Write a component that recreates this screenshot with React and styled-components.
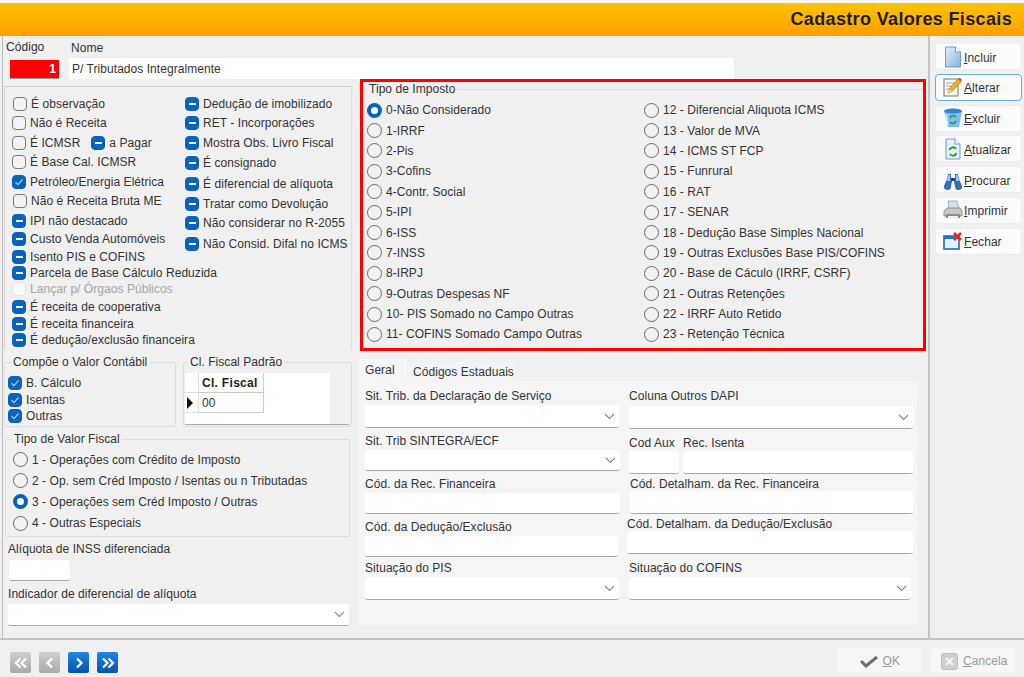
import React from "react";
import styled, { createGlobalStyle } from "styled-components";

const Global = createGlobalStyle`
  html, body { margin: 0; padding: 0; background: #fff; }
  * { box-sizing: border-box; }
  body { font-family: "Liberation Sans", Arial, sans-serif; font-size: 12px; color: #333; letter-spacing: .05px; }
`;
const Page = styled.div`width:1024px;height:677px;overflow:hidden;display:flex;flex-direction:column;background:#f0f0f0;border-top:3px solid #fbfaf5;`;
const Header = styled.header`height:33px;flex:none;display:flex;align-items:center;justify-content:flex-end;padding:0 12px 1px 0;background:linear-gradient(#ffc400,#ff9d00);`;
const Title = styled.h1`margin:0;font-size:18px;font-weight:700;color:#1c1c1c;letter-spacing:.35px;`;
const Frame = styled.div`flex:none;height:602px;display:flex;`;
const Main = styled.main`width:928px;margin-left:2px;border-left:1px solid #bdbdbd;border-right:2px solid #c4c4c4;display:flex;flex-direction:column;`;
const Side = styled.aside`flex:1;padding:7px 0 0 5px;display:flex;flex-direction:column;gap:3.8px;`;
const SideBtn = styled.button`width:87px;height:27px;flex:none;display:flex;align-items:center;gap:1px;padding:0 0 0 7px;border-radius:4px;background:#fbfbfb;font:inherit;letter-spacing:inherit;color:#333;border:${p=>p.$focus?"1.5px solid #6aaee6":"1px solid #ececec"};`;
const SideText = styled.span`padding-top:2px;`;
const U = styled.span`text-decoration:underline;`;
const TopRow = styled.div`height:44px;flex:none;display:flex;padding-left:3px;`;
const CodeField = styled.div`width:63px;padding-top:4px;`;
const NameField = styled.div`width:665px;padding-top:5px;`;
const Lbl = styled.div`height:14px;line-height:14px;white-space:nowrap;margin-left:${p=>p.$ml||0}px;margin-top:${p=>p.$mt||0}px;`;
const CodeInput = styled.div`width:49px;height:19px;margin:6px 0 0 4px;padding:0 3px;background:#ff0000;border-bottom:1px solid #999;color:#fff;font-weight:700;text-align:right;line-height:18px;`;
const NameInput = styled.div`height:21px;margin-top:3px;padding:1px 3px 0;background:#fff;line-height:21px;`;
const Columns = styled.div`flex:1;display:flex;min-height:0;`;
const LeftCol = styled.div`width:352px;flex:none;`;
const RightCol = styled.div`width:568px;margin-left:3px;flex:none;`;
const Options = styled.section`width:348px;height:264px;margin:6px 0 0 1px;padding:9px 0 0 7px;border-top:1px solid #cfcfcf;border-left:1px solid #cfcfcf;border-right:1px solid #dedede;display:grid;grid-template-columns:173px 1fr;`;
const OptCol = styled.div`display:flex;flex-direction:column;`;
const Row = styled.div`height:16px;flex:none;display:flex;align-items:center;white-space:nowrap;gap:${p=>p.$gap??4}px;margin-top:${p=>p.$mt||0}px;margin-left:${p=>p.$ml||0}px;color:${p=>p.$off?"#a5a5a5":"inherit"};`;
const CheckBox = styled.span`width:14px;height:14px;flex:none;border-radius:4px;display:flex;align-items:center;justify-content:center;margin-left:${p=>p.$ml||0}px;
  background:${p=>p.$s==="mixed"||p.$s==="checked"?"#0a63b8":"#f3f3f3"};
  border:${p=>p.$s==="mixed"||p.$s==="checked"?"1px solid #0a63b8":p.$s==="off"?"1px solid #e2e2e2":"1px solid #7a7a7a"};
  ${p=>p.$s==="off"?"background:#f8f8f8;":""}`;
const Dash = styled.span`width:7px;height:2px;background:#e8f1fa;`;
const Check = ({ s, ml }) => (
  <CheckBox $s={s} $ml={ml}>
    {s === "mixed" && <Dash />}
    {s === "checked" && <svg width="10" height="10" viewBox="0 0 10 10"><path d="M1.500 5.200 4 7.600 8.600 2.400" fill="none" stroke="#a9cbea" strokeWidth="1.300" /></svg>}
  </CheckBox>
);
const RadioDot = styled.span`width:15px;height:15px;flex:none;border-radius:50%;background:${p=>p.$on?"#fff":"#f2f2f2"};border:${p=>p.$on?"4px solid #0a63b8":"1.5px solid #6a6a6a"};`;
const LowerRow = styled.div`display:flex;margin:5px 0 0 1px;gap:7px;`;
const Group = styled.fieldset`margin:0;min-width:0;border:1px solid #dcdcdc;border-radius:2px;padding:${p=>p.$pad||"0"};width:${p=>p.$w}px;height:${p=>p.$h}px;margin-left:${p=>p.$ml||0}px;margin-top:${p=>p.$mt||0}px;`;
const Legend = styled.legend`padding:0 2px;margin-left:${p=>p.$ml??3}px;height:14px;line-height:14px;`;
const GridWrap = styled.div`height:52px;display:flex;background:#fff;border-bottom:1px solid #aaa;`;
const GridBody = styled.div`flex:1;`;
const GridScroll = styled.div`width:19px;background:#f0f0f0;`;
const GridRow = styled.div`height:20px;display:flex;`;
const Ind = styled.div`width:14px;border-right:1px solid #ddd;border-bottom:1px solid #ddd;display:flex;align-items:center;`;
const Cell = styled.div`width:65px;padding:0 3px;line-height:20px;border-right:1px solid #ccc;border-bottom:1px solid #ccc;font-weight:${p=>p.$b?700:400};letter-spacing:${p=>p.$b?".3px":"inherit"};color:${p=>p.$b?"#222":"inherit"};`;
const Red = styled.section`width:566px;height:272px;margin:-1px 0 0 2px;border:3px solid #f00;`;
const ImpostoGroup = styled.fieldset`margin:0;padding:4px 0 0 4px;height:100%;border:0;border-top:1px solid #dcdcdc;min-width:0;`;
const ImpostoGrid = styled.div`display:grid;grid-template-rows:repeat(12,20.4px);grid-auto-flow:column;grid-template-columns:277px 1fr;`;
const RadioRow = styled.div`display:flex;align-items:center;gap:4px;white-space:nowrap;`;
const Stack = styled.div`padding:6px 0 0 7px;display:flex;flex-direction:column;gap:6.2px;`;
const Tabs = styled.div`display:flex;align-items:flex-end;height:22px;margin-top:8px;`;
const Tab = styled.div`height:${p=>p.$on?23:19}px;width:${p=>p.$on?49:107}px;flex:none;white-space:nowrap;margin-left:${p=>p.$on?0:1}px;margin-bottom:${p=>p.$on?-1:0}px;display:flex;align-items:center;padding:${p=>p.$on?"0 0 2px 7px":"1px 0 0 5px"};background:${p=>p.$on?"#f5f5f5":"#f3f3f3"};position:relative;`;
const Panel = styled.div`width:559px;height:244px;background:#f5f5f5;padding:8px 0 0 7px;display:grid;grid-template-columns:264px 1fr;`;
const FormCol = styled.div`display:flex;flex-direction:column;`;
const Field = styled.div`margin-top:${p=>p.$mt||0}px;margin-left:${p=>p.$ml||0}px;width:${p=>p.$w}px;flex:none;`;
const FieldPair = styled.div`display:flex;gap:4px;margin-top:${p=>p.$mt||0}px;`;
const Ctl = styled.div`height:${p=>p.$h||21}px;margin-top:${p=>p.$gap??2}px;margin-left:${p=>p.$ml||0}px;width:${p=>p.$w?p.$w+"px":"auto"};background:#fff;border-radius:3px;border-bottom:1px solid #a8a8a8;display:flex;align-items:center;justify-content:flex-end;padding-right:4px;`;
const Chev = () => <svg width="11" height="7" viewBox="0 0 11 7"><path d="M1 1 5.500 5.500 10 1" fill="none" stroke="#8a8a8a" strokeWidth="1.100" /></svg>;
const Bottom = styled.footer`flex:1;border-top:2px solid #c4c4c4;display:flex;justify-content:space-between;padding:8px 9px 0 10px;`;
const Nav = styled.div`display:flex;gap:8px;padding-top:4px;`;
const NavBtn = styled.div`width:21px;height:21px;border-radius:2px;display:flex;align-items:center;justify-content:center;background:${p=>p.$on?"linear-gradient(#1f86e8,#0753a8)":"linear-gradient(#cfcfcf,#a9a9a9)"};`;
const Actions = styled.div`display:flex;gap:10px;`;
const ActBtn = styled.div`width:84px;height:26px;border-radius:4px;background:#f6f6f6;color:#9a9a9a;display:flex;align-items:center;justify-content:${p=>p.$end?"flex-end":"flex-start"};gap:5px;padding:${p=>p.$end?"0 21px 0 0":"0 0 0 10px"};`;

const Nv = ({ d, on }) => (
  <NavBtn $on={on}>
    <svg width="14" height="12" viewBox="0 0 14 12" fill="none" stroke="#fff" strokeWidth="2.200">
      <path d={d} />
    </svg>
  </NavBtn>
);

const IconDoc = () => (
  <svg width="20" height="22" viewBox="0 0 20 22"><defs><linearGradient id="a" x1="0" y1="0" x2="1" y2="1"><stop offset="0" stopColor="#e8f1fb" /><stop offset="1" stopColor="#7fb2e3" /></linearGradient></defs><path d="M2.500 1h10l5 5v15h-15z" fill="url(#a)" stroke="#6d9fd0" /><path d="M12.500 1v5h5" fill="#fff" stroke="#6d9fd0" /></svg>
);
const IconEdit = () => (
  <svg width="20" height="22" viewBox="0 0 20 22"><rect x="1" y="3" width="14" height="17" fill="#f7f7f2" stroke="#777" /><path d="M3 7h9M3 10h7M3 13h5" stroke="#aaa" /><path d="M5 17l1-4L15 3l3 2.500L9 15.500z" fill="#f2b21e" stroke="#a8650f" strokeWidth=".6" /><path d="M15 3l3 2.500 1-1.700-2.400-2z" fill="#d8482a" /><path d="M5 17l1-4 3 2.500z" fill="#f3dcae" /></svg>
);
const IconBin = () => (
  <svg width="20" height="22" viewBox="0 0 20 22"><path d="M1 4h18l-3 16H5z" fill="#7cc0ef" /><ellipse cx="10" cy="4" rx="9" ry="2.600" fill="#2a86d2" /><path d="M7 11a3.400 3.400 0 0 1 6-1M13 14a3.400 3.400 0 0 1-6 1" fill="none" stroke="#2e9d3a" strokeWidth="1.800" /><path d="M3 7l2 11" stroke="#d5ecfb" strokeWidth="1.400" /></svg>
);
const IconRefresh = () => (
  <svg width="20" height="22" viewBox="0 0 20 22"><path d="M3 1h9l5 5v15H3z" fill="#e6f0fa" stroke="#6d9fd0" /><path d="M12 1v5h5" fill="#fff" stroke="#6d9fd0" /><path d="M6.500 12a3.600 3.600 0 0 1 6.500-1M13.500 15a3.600 3.600 0 0 1-6.500 1" fill="none" stroke="#2e9d3a" strokeWidth="2" /></svg>
);
const IconBinoc = () => (
  <svg width="20" height="22" viewBox="0 0 20 22"><path d="M5 5h3v4h4V5h3l1 5 3 7a3 3 0 0 1-7 1l-1-6H9l-1 6a3 3 0 0 1-7-1l3-7z" fill="#2f6db5" /><path d="M5 6h2v6H4zM13 6h2l1 6h-3z" fill="#a4c6e8" /><rect x="8.500" y="9" width="3" height="3" fill="#1c3d6e" /></svg>
);
const IconPrinter = () => (
  <svg width="20" height="22" viewBox="0 0 20 22"><path d="M5 2h9l2 8H6z" fill="#cfe3f6" stroke="#7b98b5" strokeWidth=".7" /><path d="M1 12l3-3h13l2 3v5H1z" fill="#c8c8c8" stroke="#777" strokeWidth=".7" /><rect x="3" y="15" width="14" height="4" fill="#8d8d8d" /><rect x="5" y="17" width="10" height="3" fill="#f2f2f2" /></svg>
);
const IconClose = () => (
  <svg width="20" height="22" viewBox="0 0 20 22"><rect x="1" y="6" width="15" height="13" fill="#e6f2fb" stroke="#1f6bb5" strokeWidth="1.600" /><rect x="1" y="6" width="15" height="3" fill="#1f78c8" /><path d="M11 3l7 7M18 3l-7 7" stroke="#e0291c" strokeWidth="2.600" /></svg>
);

const col1 = [
  ["É observação", "empty", 0, 1],
  ["Não é Receita", "empty", 3],
  ["É ICMSR", "empty", 4, 0, true],
  ["É Base Cal. ICMSR", "empty", 3],
  ["Petróleo/Energia Elétrica", "checked", 4],
  ["Não é Receita Bruta ME", "empty", 3, 1],
  ["IPI não destacado", "mixed", 4],
  ["Custo Venda Automóveis", "mixed", 2],
  ["Isento PIS e COFINS", "mixed", 2],
  ["Parcela de Base Cálculo Reduzida", "mixed", 0],
  ["Lançar p/ Órgaos Públicos", "off", 0],
  ["É receita de cooperativa", "mixed", 2],
  ["É receita financeira", "mixed", 1],
  ["É dedução/exclusão financeira", "mixed", 0],
];
const col2 = [
  ["Dedução de imobilizado", 0],
  ["RET - Incorporações", 3],
  ["Mostra Obs. Livro Fiscal", 4],
  ["É consignado", 4],
  ["É diferencial de alíquota", 5],
  ["Tratar como Devolução", 4],
  ["Não considerar no R-2055", 3],
  ["Não Consid. Difal no ICMS", 5],
];
const impostos = ["0-Não Considerado","1-IRRF","2-Pis","3-Cofins","4-Contr. Social","5-IPI","6-ISS","7-INSS","8-IRPJ","9-Outras Despesas NF","10- PIS Somado no Campo Outras","11- COFINS Somado Campo Outras","12 - Diferencial Aliquota ICMS","13 - Valor de MVA","14 - ICMS ST FCP","15 - Funrural","16 - RAT","17 - SENAR","18 - Dedução Base Simples Nacional","19 - Outras Exclusões Base PIS/COFINS","20 - Base de Cáculo (IRRF, CSRF)","21 - Outras Retenções","22 - IRRF Auto Retido","23 - Retenção Técnica"];
const valores = ["1 - Operações com Crédito de Imposto","2 - Op. sem Créd Imposto / Isentas ou n Tributadas","3 - Operações sem Créd Imposto / Outras","4 - Outras Especiais"];
const sideBtns = [
  [IconDoc, "I", "ncluir"],
  [IconEdit, "A", "lterar", true],
  [IconBin, "E", "xcluir"],
  [IconRefresh, "A", "tualizar"],
  [IconBinoc, "P", "rocurar"],
  [IconPrinter, "I", "mprimir"],
  [IconClose, "F", "echar"],
];

export default function App() {
  return (
    <Page>
      <Global />
      <Header><Title>Cadastro Valores Fiscais</Title></Header>
      <Frame>
        <Main>
          <TopRow>
            <CodeField><Lbl>Código</Lbl><CodeInput>1</CodeInput></CodeField>
            <NameField><Lbl $ml={2}>Nome</Lbl><NameInput>P/ Tributados Integralmente</NameInput></NameField>
          </TopRow>
          <Columns>
            <LeftCol>
              <Options>
                <OptCol>
                  {col1.map(([t, s, mt, ml, extra]) => (
                    <Row key={t} $mt={mt} $ml={ml}  $off={s === "off"}>
                      <Check s={s} />
                      <span>{t}</span>
                      {extra && <><Check s="mixed" ml={7} /><span>a Pagar</span></>}
                    </Row>
                  ))}
                </OptCol>
                <OptCol>
                  {col2.map(([t, mt]) => (
                    <Row key={t} $mt={mt}><Check s="mixed" /><span>{t}</span></Row>
                  ))}
                </OptCol>
              </Options>
              <LowerRow>
                <Group $w={172} $h={72} $pad="6px 0 0 3px">
                  <Legend>Compõe o Valor Contábil</Legend>
                  <Row><Check s="checked" /><span>B. Cálculo</span></Row>
                  <Row $mt={1}><Check s="checked" /><span>Isentas</span></Row>
                  <Row><Check s="checked" /><span>Outras</span></Row>
                </Group>
                <Group $w={169} $h={72} $pad="4px 2px 0 1px">
                  <Legend>Cl. Fiscal Padrão</Legend>
                  <GridWrap>
                    <GridBody>
                      <GridRow><Ind /><Cell $b>Cl. Fiscal</Cell></GridRow>
                      <GridRow>
                        <Ind><svg width="8" height="12" viewBox="0 0 8 12"><path d="M2 0l6 6-6 6z" fill="#111" /></svg></Ind>
                        <Cell>00</Cell>
                      </GridRow>
                    </GridBody>
                    <GridScroll />
                  </GridWrap>
                </Group>
              </LowerRow>
              <Group $w={345} $h={105} $ml={2} $mt={5}>
                <Legend $ml={6}>Tipo de Valor Fiscal</Legend>
                <Stack>
                  {valores.map((v, i) => (
                    <RadioRow key={v}><RadioDot $on={i === 2} /><span>{v}</span></RadioRow>
                  ))}
                </Stack>
              </Group>
              <Lbl $ml={5} $mt={5}>Alíquota de INSS diferenciada</Lbl>
              <Ctl $w={61} $ml={6} $gap={4} />
              <Lbl $ml={5} $mt={6}>Indicador de diferencial de alíquota</Lbl>
              <Ctl $w={341} $ml={5} $gap={3} $h={22}><Chev /></Ctl>
            </LeftCol>
            <RightCol>
              <Red>
                <ImpostoGroup>
                  <Legend $ml={0}>Tipo de Imposto</Legend>
                  <ImpostoGrid>
                    {impostos.map((v, i) => (
                      <RadioRow key={v}><RadioDot $on={i === 0} /><span>{v}</span></RadioRow>
                    ))}
                  </ImpostoGrid>
                </ImpostoGroup>
              </Red>
              <Tabs>
                <Tab $on>Geral</Tab>
                <Tab>Códigos Estaduais</Tab>
              </Tabs>
              <Panel>
                <FormCol>
                  <Field $w={254}><Lbl>Sit. Trib. da Declaração de Serviço</Lbl><Ctl $h={23}><Chev /></Ctl></Field>
                  <Field $w={255} $mt={6}><Lbl>Sit. Trib SINTEGRA/ECF</Lbl><Ctl><Chev /></Ctl></Field>
                  <Field $w={255} $mt={6}><Lbl>Cód. da Rec. Financeira</Lbl><Ctl /></Field>
                  <Field $w={253} $mt={6}><Lbl>Cód. da Dedução/Exclusão</Lbl><Ctl /></Field>
                  <Field $w={254} $mt={4}><Lbl>Situação do PIS</Lbl><Ctl $h={23}><Chev /></Ctl></Field>
                </FormCol>
                <FormCol>
                  <Field $w={284}><Lbl>Coluna Outros DAPI</Lbl><Ctl $h={23} $gap={3}><Chev /></Ctl></Field>
                  <FieldPair $mt={7}>
                    <Field $w={50}><Lbl>Cod Aux</Lbl><Ctl $h={23} $gap={1} /></Field>
                    <Field $w={230}><Lbl>Rec. Isenta</Lbl><Ctl $h={23} $gap={1} /></Field>
                  </FieldPair>
                  <Field $w={283} $ml={1} $mt={3}><Lbl>Cód. Detalham. da Rec. Financeira</Lbl><Ctl $h={23} $gap={0} /></Field>
                  <Field $w={286} $ml={-2} $mt={3}><Lbl>Cód. Detalham. da Dedução/Exclusão</Lbl><Ctl $h={23} $gap={0} /></Field>
                  <Field $w={282} $mt={7}><Lbl>Situação do COFINS</Lbl><Ctl $h={23}><Chev /></Ctl></Field>
                </FormCol>
              </Panel>
            </RightCol>
          </Columns>
        </Main>
        <Side>
          {sideBtns.map(([I, a, b, f], i) => (
            <SideBtn key={i} $focus={f}><I /><SideText><U>{a}</U>{b}</SideText></SideBtn>
          ))}
        </Side>
      </Frame>
      <Bottom>
        <Nav>
          <Nv d="M6.500 1.500 2 6l4.500 4.500M12 1.500 7.500 6l4.500 4.500" />
          <Nv d="M9 1.500 4.500 6 9 10.500" />
          <Nv on d="M5 1.500 9.500 6 5 10.500" />
          <Nv on d="M2 1.500 6.500 6 2 10.500M7.500 1.500 12 6l-4.500 4.500" />
        </Nav>
        <Actions>
          <ActBtn $end>
            <svg width="18" height="14" viewBox="0 0 18 14"><path d="M1 7l5 5L17 3" fill="none" stroke="#6e6e6e" strokeWidth="3" /></svg>
            <span><U>O</U>K</span>
          </ActBtn>
          <ActBtn>
            <svg width="17" height="17" viewBox="0 0 17 17"><rect x=".5" y=".5" width="16" height="16" rx="2" fill="#cfcfcf" stroke="#bdbdbd" /><path d="M5 5l7 7M12 5l-7 7" stroke="#f4f4f4" strokeWidth="2.400" /></svg>
            <span><U>C</U>ancela</span>
          </ActBtn>
        </Actions>
      </Bottom>
    </Page>
  );
}
